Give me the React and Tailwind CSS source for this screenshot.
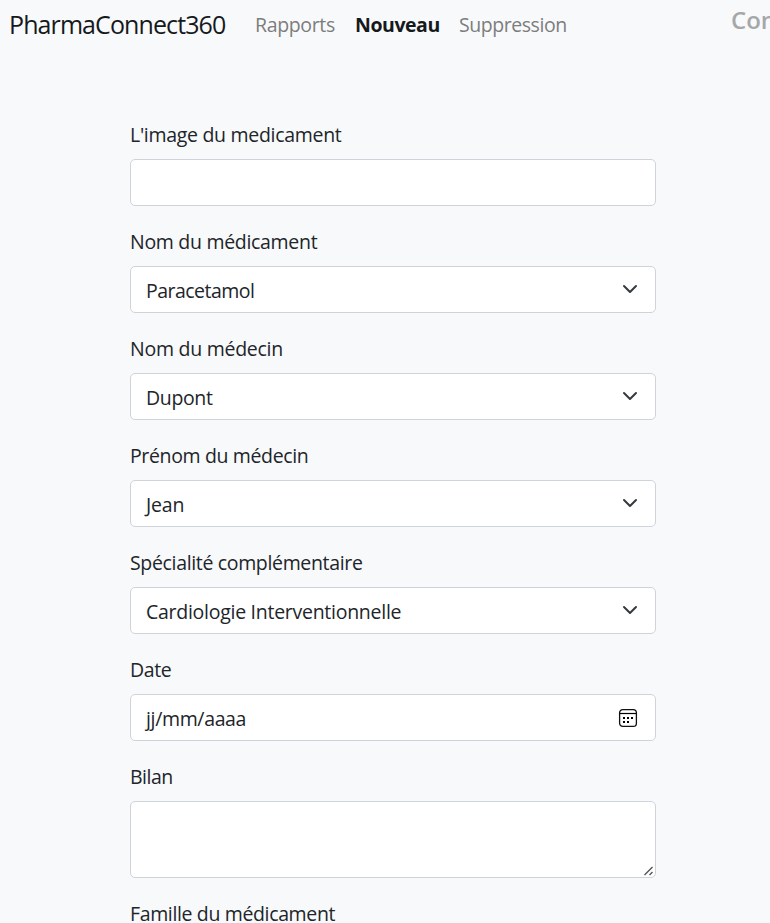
function Chevron() {
  return (
    <svg className="-mt-px h-4 w-4 shrink-0" viewBox="0 0 16 16" fill="none">
      <path d="m2 5 6 6 6-6" stroke="#343a40" strokeWidth="2" strokeLinecap="round" strokeLinejoin="round" />
    </svg>
  );
}

function Calendar() {
  return (
    <svg className="h-5 w-5 shrink-0" viewBox="0 0 20 20" fill="none">
      <rect x="1.6" y="1.6" width="16.8" height="16.8" rx="3.2" stroke="#111" strokeWidth="1.3" />
      <path d="M1.5 5.5h17" stroke="#000" strokeWidth="1.2" />
      <path d="M5 9h2v2H5zM9 9h2v2H9zM13 9h2v2h-2zM5 13h2v2H5zM9 13h2v2H9z" fill="#000" />
    </svg>
  );
}

function Field({ label, tracking, value, valueTracking, icon }) {
  return (
    <div className="mb-5">
      <div className={`mb-2.5 h-[30px] leading-8 whitespace-nowrap ${tracking}`}>{label}</div>
      <div className="flex h-[47px] items-center justify-between rounded-[5px] border border-[#ced4da] bg-white pr-[17px] pl-[15px]">
        <span className={`whitespace-nowrap pt-0.5 ${valueTracking ?? ""}`}>{value}</span>
        {icon}
      </div>
    </div>
  );
}

export default function App() {
  return (
    <div className="h-[923px] w-[770px] overflow-hidden bg-[#f8f9fb] font-['Open_Sans','Noto_Sans',sans-serif] text-[19.5px] font-[370] text-[#212529]">
      <nav className="flex h-[50px] items-center whitespace-nowrap pl-[9px] text-[#7c7d7d]">
        <span className="w-[246px] shrink-0 text-[25px] tracking-[-0.9px] text-[#16191c]">PharmaConnect360</span>
        <span className="w-[100px] shrink-0 tracking-[-0.35px]">Rapports</span>
        <span className="w-[104px] shrink-0 font-bold tracking-[-0.45px] text-[#16191c]">Nouveau</span>
        <span className="w-[272px] shrink-0 tracking-[-0.45px]">Suppression</span>
        <span className="-mt-2.5 shrink-0 text-[24px] font-semibold text-[#a6a7a8]">Connexion</span>
      </nav>
      <form className="mt-[69px] ml-[130px] w-[526px]">
        <Field label="L'image du medicament" tracking="tracking-[-0.3px]" />
        <Field label="Nom du médicament" tracking="tracking-[-0.3px]" value="Paracetamol" valueTracking="tracking-[-0.53px]" icon={<Chevron />} />
        <Field label="Nom du médecin" tracking="tracking-[-0.26px]" value="Dupont" valueTracking="tracking-[-0.35px]" icon={<Chevron />} />
        <Field label="Prénom du médecin" tracking="tracking-[-0.36px]" value="Jean" valueTracking="tracking-[-0.2px]" icon={<Chevron />} />
        <Field label="Spécialité complémentaire" tracking="tracking-[-0.34px]" value="Cardiologie Interventionnelle" valueTracking="tracking-[-0.27px]" icon={<Chevron />} />
        <Field label="Date" tracking="tracking-[-0.4px]" value="jj/mm/aaaa" valueTracking="tracking-[-0.35px]" icon={<Calendar />} />
        <div className="mb-2.5 h-[30px] leading-8 tracking-[-0.5px]">Bilan</div>
        <div className="mb-5 flex h-[77px] items-end justify-end rounded-[5px] border border-[#ced4da] bg-white">
          <svg className="h-3 w-3" viewBox="0 0 12 12" fill="none">
            <path d="m1.5 10 8-8M6.5 10l3-3" stroke="#555" strokeWidth="1.4" />
          </svg>
        </div>
        <div className="h-[30px] leading-8 tracking-[-0.36px]">Famille du médicament</div>
      </form>
    </div>
  );
}
